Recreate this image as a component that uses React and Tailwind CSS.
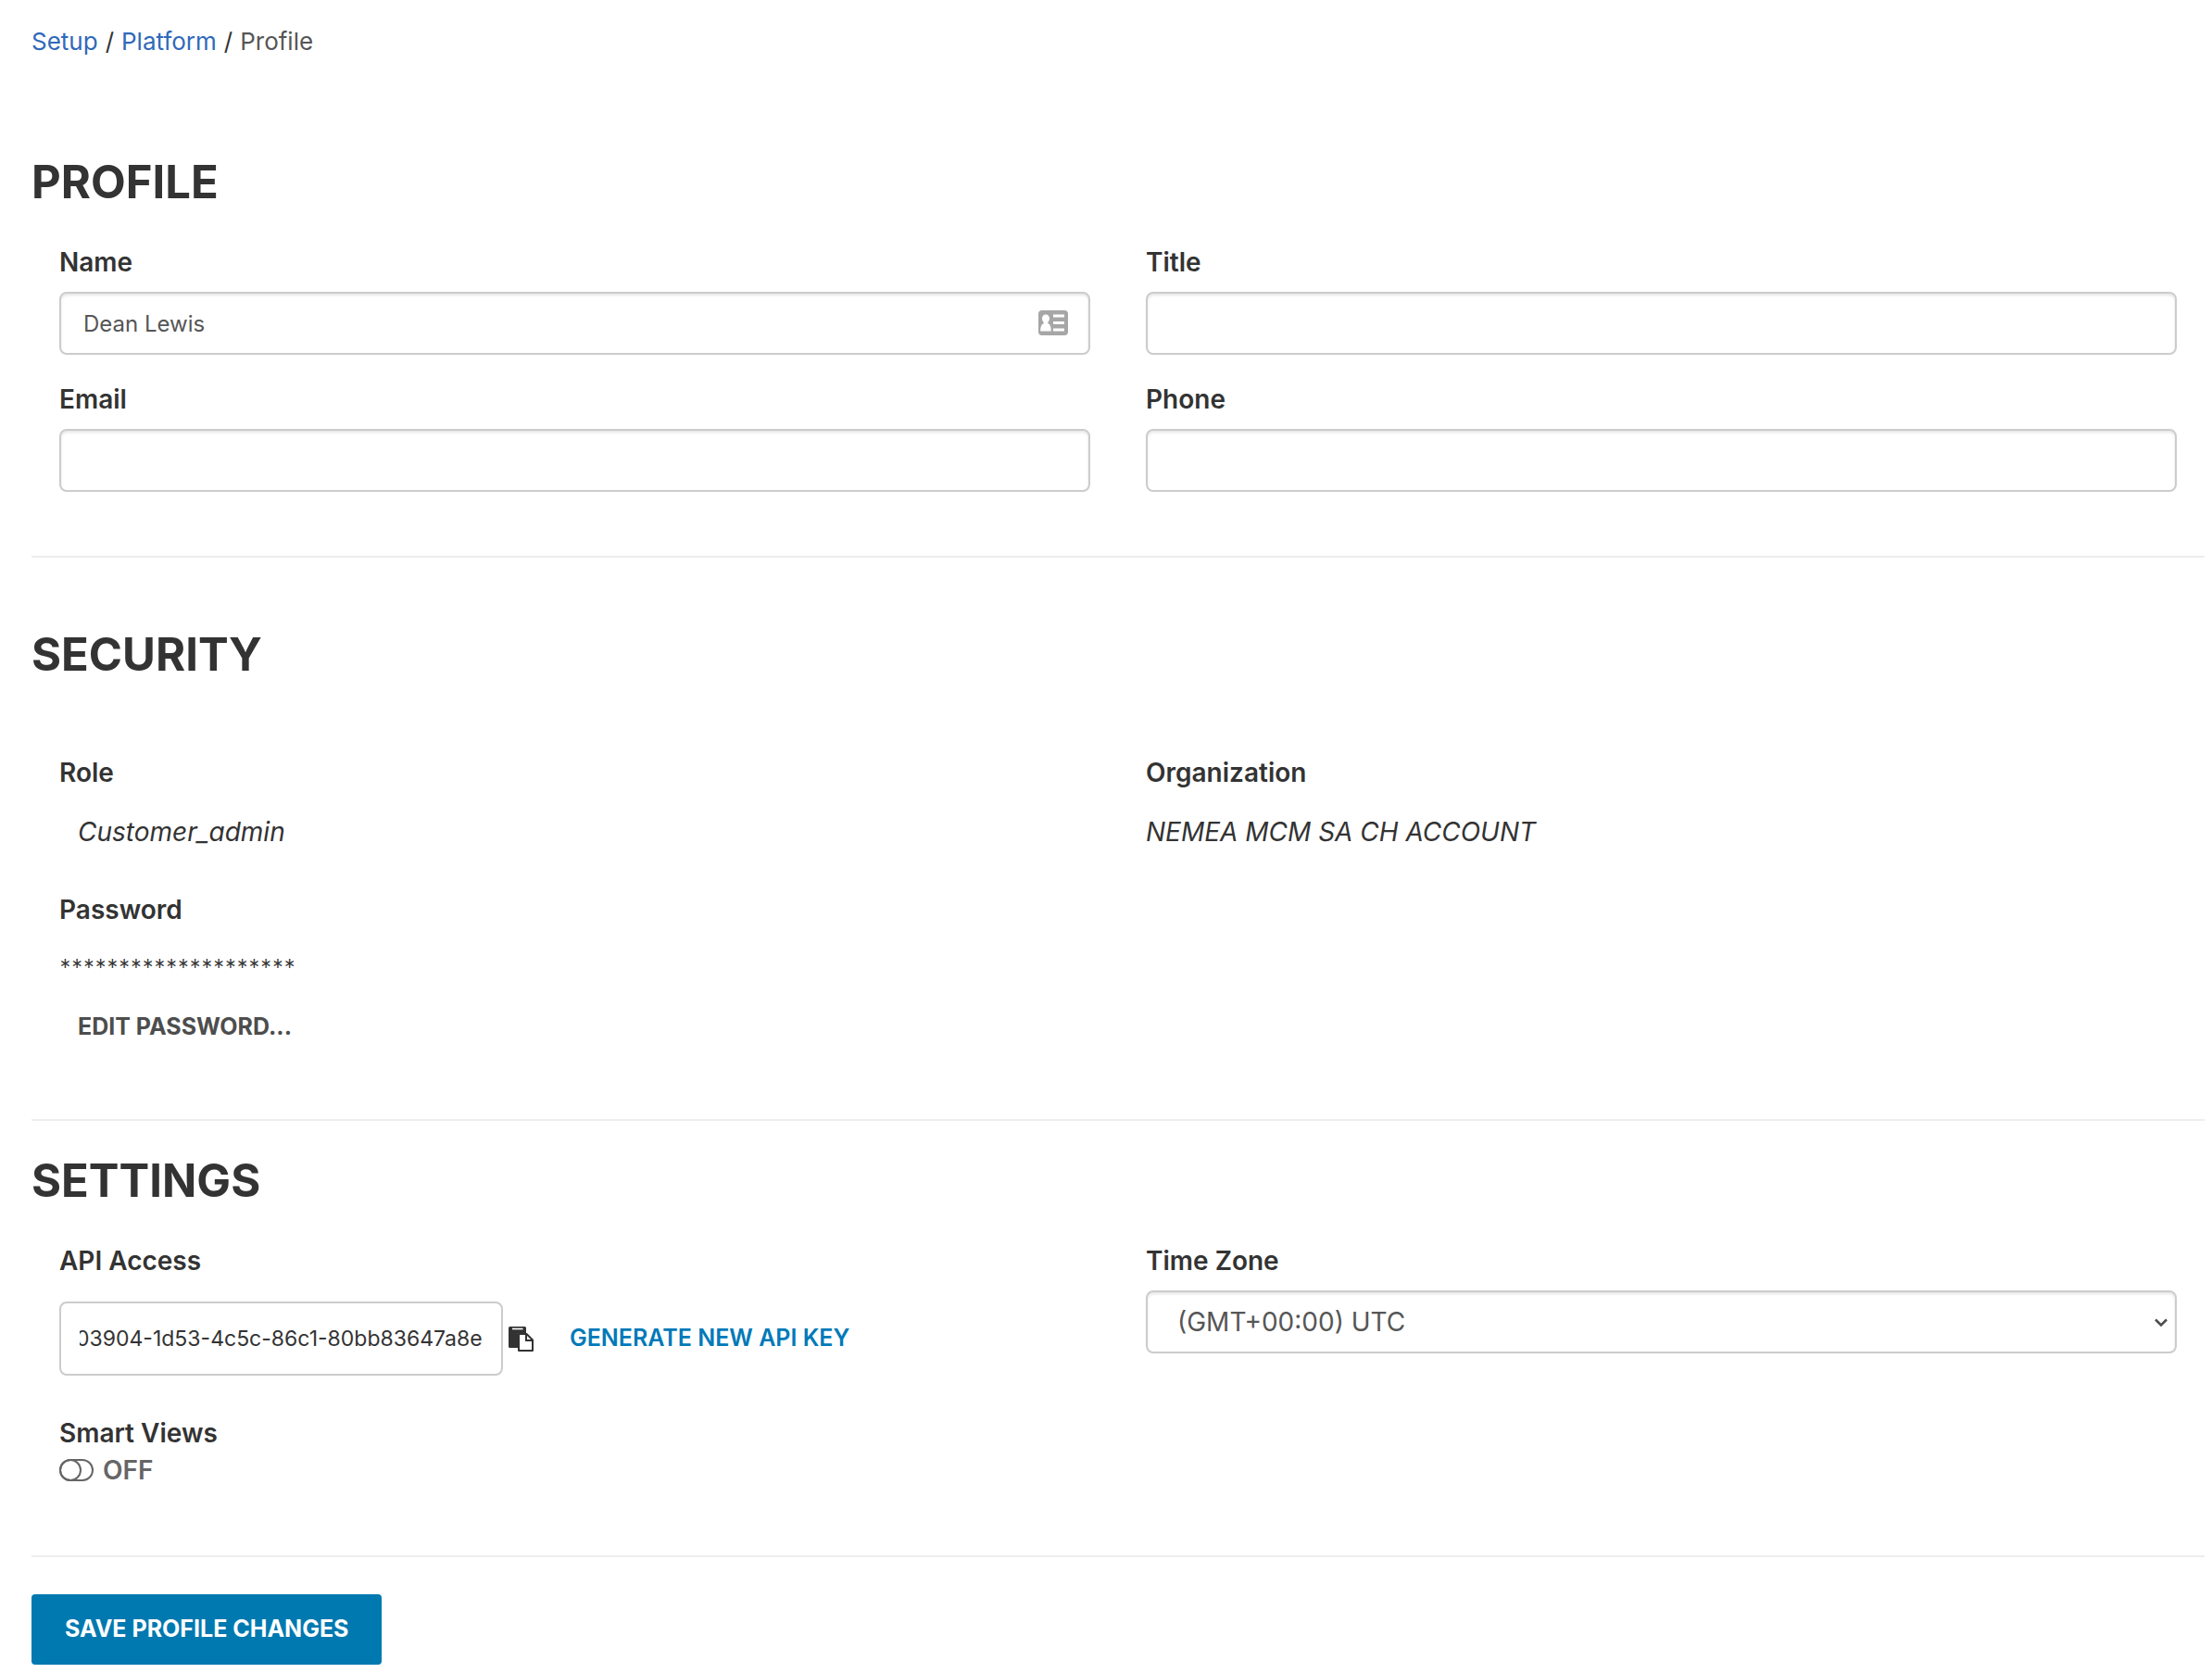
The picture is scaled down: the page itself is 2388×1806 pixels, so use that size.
import { useEffect, useRef, useState } from "react";

const inputClass =
    "block w-full h-[68px] rounded-lg border-2 border-[#cccccc] bg-white px-6 text-2xl text-[#565656] shadow-[inset_0_2px_3px_rgba(0,0,0,0.1)] outline-none focus:border-[#0079b8]";

function Field({ id, label, children }) {

    return (

        <div>

            <label htmlFor={id} className="block text-[28px] leading-10 font-semibold">
                {label}
            </label>

            <div className="mt-3">
                {children}
            </div>

        </div>

    );

}

function ReadOnlyField({ label, children }) {

    return (

        <div>

            <dt className="text-[28px] leading-10 font-semibold">
                {label}
            </dt>

            <dd className="mt-6 text-[28px] leading-10">
                {children}
            </dd>

        </div>

    );

}

function SectionTitle({ children }) {

    return (
        <h2 className="text-[49px] leading-[60px] font-bold uppercase">
            {children}
        </h2>
    );

}

function ContactIcon() {

    return (
        <svg width="32" height="27" viewBox="0 0 32 27" aria-hidden="true">
            <rect width="32" height="27" rx="4" fill="#a6a6a6" />
            <path
                d="M8 4.5c2.4 0 4 1.9 4 4.2 0 1.8-.8 3.4-1.8 4.3v.9c2.4.9 3.6 3.6 3.6 8.6H2.2c0-5 1.2-7.7 3.6-8.6V13C4.8 12.1 4 10.5 4 8.7c0-2.300 1.600-4.200 4-4.200z"
                fill="#fff"
            />
            <path d="M16 4.5h12V7.5H16zM16 12h12v3H16zM16 19.500h12v3H16z" fill="#fff" />
        </svg>
    );

}

function PasteIcon() {

    return (
        <svg width="27" height="27" viewBox="0 0 27 27" aria-hidden="true">
            <path d="M1.5 0H17.5Q19 0 19 1.5V7H11.5Q10 7 10 8.5V23H1.5Q0 23 0 21.5V1.5Q0 0 1.5 0z" fill="#333" />
            <path d="M4 2.5H15.5" stroke="#fff" strokeWidth="1.6" />
            <path d="M11 8H19.5L26 14.5V26H11z" fill="#fff" stroke="#333" strokeWidth="2" strokeLinejoin="round" />
            <path d="M19 8V15H26" fill="none" stroke="#333" strokeWidth="2" />
        </svg>
    );

}

function ToggleIcon({ on }) {

    return (
        <svg width="37" height="24" viewBox="0 0 37 24" fill="none" stroke="#666" strokeWidth="2" aria-hidden="true">
            <rect x="1" y="1" width="35" height="22" rx="11" />
            <circle cx={on ? 25 : 12} cy="12" r="11" />
        </svg>
    );

}

function App() {

    const [name, setName] = useState("Dean Lewis");
    const [smartViews, setSmartViews] = useState(false);
    const apiKeyRef = useRef(null);

    // keep the end of the key in view
    useEffect(() => {

        const input = apiKeyRef.current;

        input.scrollLeft = input.scrollWidth;

    }, []);

    return (

        <main className="min-h-screen bg-white pt-[27px] pr-2 pb-2 pl-[34px] font-['Inter',sans-serif] text-[#333333]">

            <nav aria-label="Breadcrumb" className="flex gap-2 text-[26px] leading-9">
                <a href="#setup" className="text-[#3069ba]">Setup</a>
                <span>/</span>
                <a href="#platform" className="text-[#3069ba]">Platform</a>
                <span>/</span>
                <span className="text-[#565656]">Profile</span>
            </nav>

            <form onSubmit={(e) => e.preventDefault()}>

                <section className="mt-[104px]">

                    <SectionTitle>Profile</SectionTitle>

                    <div className="grid grid-cols-2 gap-x-[60px] gap-y-7 px-[30px] mt-9">

                        <Field id="name" label="Name">
                            <div className="relative">
                                <input
                                    id="name"
                                    type="text"
                                    value={name}
                                    onChange={(e) => setName(e.target.value)}
                                    className={inputClass}
                                />
                                <span className="absolute right-6 top-5">
                                    <ContactIcon />
                                </span>
                            </div>
                        </Field>

                        <Field id="title" label="Title">
                            <input id="title" type="text" className={inputClass} />
                        </Field>

                        <Field id="email" label="Email">
                            <input id="email" type="email" className={inputClass} />
                        </Field>

                        <Field id="phone" label="Phone">
                            <input id="phone" type="tel" className={inputClass} />
                        </Field>

                    </div>

                </section>

                <hr className="mt-[69px] border-t-2 border-[#eeeeee]" />

                <section className="mt-[75px]">

                    <SectionTitle>Security</SectionTitle>

                    <dl className="grid grid-cols-2 gap-x-[60px] gap-y-11 px-[30px] mt-[77px]">

                        <ReadOnlyField label="Role">
                            <em className="pl-5">Customer_admin</em>
                        </ReadOnlyField>

                        <ReadOnlyField label="Organization">
                            <em>NEMEA MCM SA CH ACCOUNT</em>
                        </ReadOnlyField>

                        <ReadOnlyField label="Password">
                            <span className="block font-['Lato',sans-serif] text-3xl leading-10">********************</span>
                        </ReadOnlyField>

                    </dl>

                    <button
                        type="button"
                        className="ml-[30px] mt-[22px] px-5 text-[25px] leading-10 font-bold uppercase text-[#4d4d4d]"
                    >
                        Edit password...
                    </button>

                </section>

                <hr className="mt-20 border-t-2 border-[#eeeeee]" />

                <section className="mt-[35px]">

                    <SectionTitle>Settings</SectionTitle>

                    <div className="grid grid-cols-2 gap-x-[60px] px-[30px] mt-9">

                        <Field id="api-key" label="API Access">
                            <div className="flex items-center pt-3">
                                <input
                                    ref={apiKeyRef}
                                    id="api-key"
                                    type="text"
                                    readOnly
                                    value="03904-1d53-4c5c-86c1-80bb83647a8e"
                                    className="w-[479px] h-20 rounded-lg border-2 border-[#cccccc] bg-white px-5 text-[23px] outline-none"
                                />
                                <button type="button" aria-label="Copy API key" className="ml-1.5">
                                    <PasteIcon />
                                </button>
                                <button
                                    type="button"
                                    className="ml-[39px] text-[25px] font-semibold uppercase text-[#0079b8]"
                                >
                                    Generate new API key
                                </button>
                            </div>
                        </Field>

                        <Field id="time-zone" label="Time Zone">
                            <div className="relative">
                                <select
                                    id="time-zone"
                                    className="block w-full h-[68px] appearance-none rounded-lg border-2 border-[#cccccc] bg-white px-8 text-[28px] text-[#565656] shadow-[inset_0_2px_3px_rgba(0,0,0,0.1)] outline-none"
                                >
                                    <option>(GMT+00:00) UTC</option>
                                </select>
                                <svg
                                    className="pointer-events-none absolute right-[9px] top-[30px]"
                                    width="16"
                                    height="10"
                                    viewBox="0 0 16 10"
                                    fill="none"
                                    stroke="#4d4d4d"
                                    strokeWidth="2.5"
                                    aria-hidden="true"
                                >
                                    <path d="M2 1.5L8 7.5L14 1.5" />
                                </svg>
                            </div>
                        </Field>

                    </div>

                    <div className="px-[30px] mt-[42px]">

                        <p id="smart-views" className="text-[28px] leading-10 font-semibold">
                            Smart Views
                        </p>

                        <button
                            type="button"
                            role="switch"
                            aria-checked={smartViews}
                            aria-labelledby="smart-views"
                            onClick={() => setSmartViews(!smartViews)}
                            className="flex items-center gap-2.5 text-[28px] leading-10 font-semibold text-[#666666]"
                        >
                            <ToggleIcon on={smartViews} />
                            {smartViews ? "ON" : "OFF"}
                        </button>

                    </div>

                </section>

                <hr className="mt-[72px] border-t-2 border-[#eeeeee]" />

                <button
                    type="submit"
                    className="mt-10 h-[76px] rounded-sm bg-[#0079b0] px-9 text-[25px] font-bold uppercase text-white"
                >
                    Save profile changes
                </button>

            </form>

        </main>

    );

}

export default App;
